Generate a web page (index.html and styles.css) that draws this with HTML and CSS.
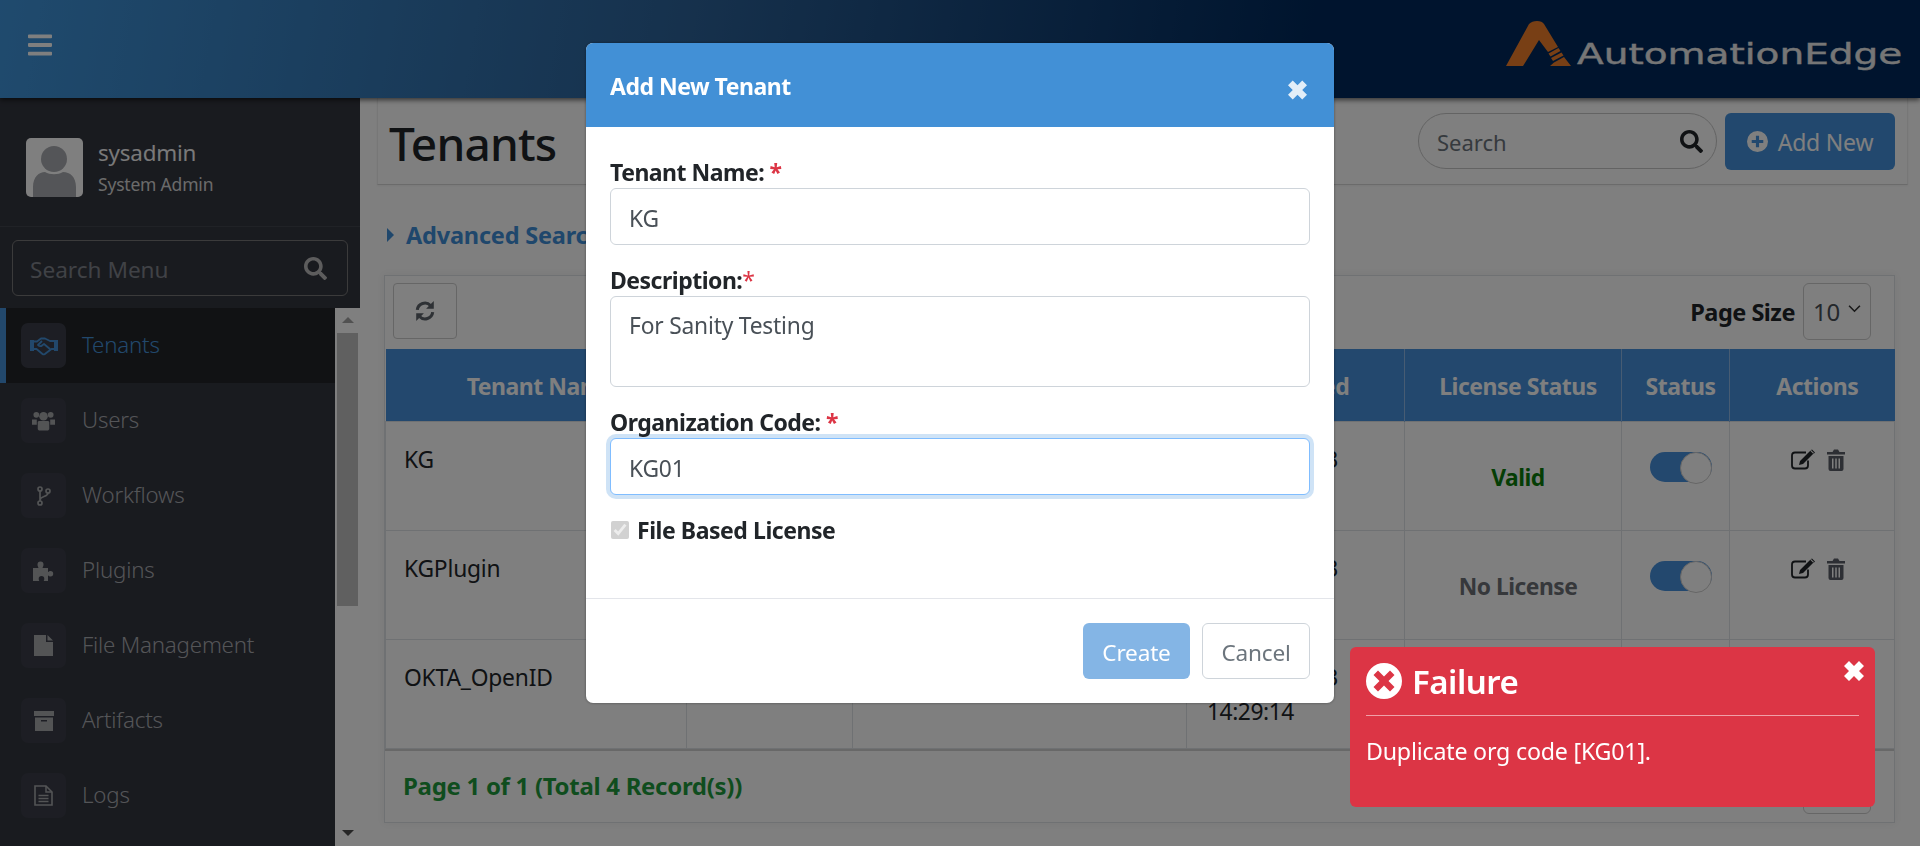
FILE: index.html
```html
<!DOCTYPE html>
<html lang="en">
<head>
    <meta charset="UTF-8">
    <meta name="viewport" content="width=device-width, initial-scale=1.0">
    <title>Tenants | AutomationEdge</title>
    <link rel="stylesheet" href="styles.css">
</head>
<body>
    <!-- Icons -->
    <svg class="sprite" xmlns="http://www.w3.org/2000/svg">
        <symbol id="i-bars" viewBox="0 0 448 512"><path d="M16 132h416c8.837 0 16-7.163 16-16V76c0-8.837-7.163-16-16-16H16C7.163 60 0 67.163 0 76v40c0 8.837 7.163 16 16 16zm0 160h416c8.837 0 16-7.163 16-16v-40c0-8.837-7.163-16-16-16H16c-8.837 0-16 7.163-16 16v40c0 8.837 7.163 16 16 16zm0 160h416c8.837 0 16-7.163 16-16v-40c0-8.837-7.163-16-16-16H16c-8.837 0-16 7.163-16 16v40c0 8.837 7.163 16 16 16z"/></symbol>
        <symbol id="i-search" viewBox="0 0 512 512"><path d="M505 442.7L405.3 343c-4.5-4.5-10.6-7-17-7H372c27.6-35.3 44-79.7 44-128C416 93.1 322.9 0 208 0S0 93.1 0 208s93.1 208 208 208c48.3 0 92.7-16.4 128-44v16.3c0 6.4 2.5 12.5 7 17l99.7 99.7c9.4 9.4 24.6 9.4 33.9 0l28.3-28.3c9.4-9.4 9.4-24.6.1-34zM208 336c-70.7 0-128-57.2-128-128 0-70.7 57.2-128 128-128 70.7 0 128 57.2 128 128 0 70.7-57.2 128-128 128z"/></symbol>
        <symbol id="i-handshake" viewBox="0 0 28 20"><path d="M0 4h4v11H0zM24 4h4v11h-4z"/><path d="M4 5.500h3l4-3h4l5 2.500h4M4 13h2.500l6 5c1 .8 2.500.3 3-.5l6-4.500h2.500M12 5l-4 4c1 1.500 3 1.500 4 .500l2-1.500 6.500 5.500" fill="none" stroke="currentColor" stroke-width="1.800" stroke-linejoin="round"/></symbol>
        <symbol id="i-users" viewBox="0 0 24 20"><circle cx="4.500" cy="3.500" r="3"/><circle cx="19.500" cy="3.500" r="3"/><circle cx="12" cy="5" r="4.500"/><path d="M0 8.500h5v5.500H0zM19 8.500h5v5.500h-5z"/><path d="M6 11.500c0-1 1-1.500 2-1.500h8c1 0 2 .5 2 1.500V18c0 1-1 2-2 2H8c-1 0-2-1-2-2z"/></symbol>
        <symbol id="i-branch" viewBox="0 0 14 20"><g fill="none" stroke="currentColor" stroke-width="1.700"><circle cx="3" cy="3" r="2"/><circle cx="3" cy="17" r="2"/><circle cx="11" cy="5" r="2"/><path d="M3 5v10M11 7c0 4-8 3-8 7"/></g></symbol>
        <symbol id="i-puzzle" viewBox="0 0 21 20"><path d="M0 7h5.500C5 5.500 4.500 5 4.500 3.500a3 3 0 0 1 6 0c0 1.500-.5 2-1 3.500H15v4c1-.5 1.500-1 2.500-1a2.700 2.700 0 0 1 0 5.400c-1 0-1.500-.5-2.500-1v6h-4.500c.5-1 .8-1.500.8-2.500a2.800 2.800 0 0 0-5.600 0c0 1 .3 1.500.8 2.500H0z"/></symbol>
        <symbol id="i-file" viewBox="0 0 19 21"><path d="M0 0h12v7h7v14H0zM13.500 0L19 5.500h-5.500z"/></symbol>
        <symbol id="i-archive" viewBox="0 0 20 20"><path d="M0 0h20v5H0zM1 6.500h18V20H1zM7 9v1.500h6V9z" fill-rule="evenodd"/></symbol>
        <symbol id="i-doc" viewBox="0 0 19 21"><path d="M1 1h11l6 6v13H1z" fill="none" stroke="currentColor" stroke-width="1.600"/><path d="M12 1v6h6M4.500 10.500h10M4.500 13.500h10M4.500 16.500h10" fill="none" stroke="currentColor" stroke-width="1.500"/></symbol>
        <symbol id="i-sync" viewBox="0 0 20 20"><path d="M3 9a7 7 0 0 1 12-4M17 11a7 7 0 0 1-12 4" fill="none" stroke="currentColor" stroke-width="2.800"/><path d="M18 1v7h-7zM2 19v-7h7z"/></symbol>
        <symbol id="i-plus" viewBox="0 0 20 20"><path fill-rule="evenodd" d="M10 0a10 10 0 1 1 0 20 10 10 0 0 1 0-20zM8.500 4.500v4h-4v3h4v4h3v-4h4v-3h-4v-4z"/></symbol>
        <symbol id="i-edit" viewBox="0 0 24 20"><path d="M15 3H4a3 3 0 0 0-3 3v10a3 3 0 0 0 3 3h10a3 3 0 0 0 3-3v-5" fill="none" stroke="currentColor" stroke-width="1.800"/><path d="M20 .5l3 3L12 14.500l-4 1 1-4zM19 1l3.500 3.500L24 3l-3-3z"/></symbol>
        <symbol id="i-trash" viewBox="0 0 18 22"><path fill-rule="evenodd" d="M0 3h5.500L7 .5h4L12.500 3H18v2.500H0zM1.500 7h15v13a2 2 0 0 1-2 2h-11a2 2 0 0 1-2-2zM5 9.500v10h1.500v-10zM8.250 9.500v10h1.500v-10zM11.500 9.500v10H13v-10z"/></symbol>
        <symbol id="i-times" viewBox="0 0 20 20"><path d="M5 0l5 5 5-5 5 5-5 5 5 5-5 5-5-5-5 5-5-5 5-5-5-5z"/></symbol>
        <symbol id="i-times-circle" viewBox="0 0 36 36"><path fill-rule="evenodd" d="M18 0a18 18 0 1 1 0 36 18 18 0 0 1 0-36zM12 7.500L7.500 12l6 6-6 6 4.500 4.500 6-6 6 6 4.500-4.500-6-6 6-6L24 7.500l-6 6z"/></symbol>
    </svg>

    <div class="app">
        <!-- Top bar -->
        <header class="topbar">
            <svg class="menu-toggle"><use href="#i-bars"/></svg>
            <div class="brand">
                <svg class="brand-mark" viewBox="0 0 65 45">
                    <path d="M0 45L23 3Q26 0 31 0 36 0 38 3L52 26 42 31 33 19 17 45z" fill="#f07f2a"/>
                    <path d="M42.500 32.500L52.500 27 54.500 30 44.500 35.500zM45 37L55.500 31.500 57.500 34.500 47 40zM44 45L48 41.500 58 36 65 45z" fill="#f07f2a"/>
                </svg>
                <span class="brand-name">AutomationEdge</span>
            </div>
        </header>

        <div class="layout">
            <!-- Sidebar -->
            <aside class="sidebar">
                <div class="user-box">
                    <div class="avatar">
                        <svg viewBox="0 0 57 59"><circle cx="28" cy="21" r="13" fill="#a9abb0"/><path d="M7 59V49c0-10 6-15 12-15 5 3 13 3 18 0 7 0 13 5 13 15v10z" fill="#a9abb0"/></svg>
                    </div>
                    <div>
                        <div class="user-name">sysadmin</div>
                        <div class="user-role">System Admin</div>
                    </div>
                </div>
                <div class="menu-search-wrap">
                    <div class="menu-search">
                        <input type="text" placeholder="Search Menu">
                        <svg><use href="#i-search"/></svg>
                    </div>
                </div>
                <div class="menu-area">
                    <ul class="menu">
                        <li class="menu-item active"><span class="menu-icon"><svg class="ic-hand"><use href="#i-handshake"/></svg></span><span class="menu-label">Tenants</span></li>
                        <li class="menu-item"><span class="menu-icon"><svg class="ic-users"><use href="#i-users"/></svg></span><span class="menu-label">Users</span></li>
                        <li class="menu-item"><span class="menu-icon"><svg class="ic-branch"><use href="#i-branch"/></svg></span><span class="menu-label">Workflows</span></li>
                        <li class="menu-item"><span class="menu-icon"><svg class="ic-puzzle"><use href="#i-puzzle"/></svg></span><span class="menu-label">Plugins</span></li>
                        <li class="menu-item"><span class="menu-icon"><svg class="ic-file"><use href="#i-file"/></svg></span><span class="menu-label">File Management</span></li>
                        <li class="menu-item"><span class="menu-icon"><svg class="ic-archive"><use href="#i-archive"/></svg></span><span class="menu-label">Artifacts</span></li>
                        <li class="menu-item"><span class="menu-icon"><svg class="ic-file"><use href="#i-doc"/></svg></span><span class="menu-label">Logs</span></li>
                    </ul>
                    <div class="scrollbar">
                        <span class="arrow-up"></span>
                        <span class="thumb"></span>
                        <span class="arrow-down"></span>
                    </div>
                </div>
            </aside>

            <!-- Main content -->
            <main class="content">
                <div class="page-head">
                    <h1>Tenants</h1>
                    <div class="page-actions">
                        <div class="search-pill">
                            <input type="text" placeholder="Search">
                            <svg><use href="#i-search"/></svg>
                        </div>
                        <button class="btn-add"><svg><use href="#i-plus"/></svg>Add New</button>
                    </div>
                </div>

                <div class="advanced"><span class="caret"></span>Advanced Search</div>

                <div class="card">
                    <div class="toolbar">
                        <button class="btn-refresh"><svg><use href="#i-sync"/></svg></button>
                        <div class="page-size">
                            <b>Page Size</b>
                            <div class="size-select">10<svg viewBox="0 0 12 8"><path d="M1 1.500l5 5 5-5" fill="none" stroke="currentColor" stroke-width="1.500"/></svg></div>
                        </div>
                    </div>
                    <table class="grid">
                        <colgroup>
                            <col class="c1"><col class="c2"><col class="c3"><col class="c4"><col class="c5"><col class="c6"><col class="c7">
                        </colgroup>
                        <thead>
                            <tr>
                                <th>Tenant Name</th><th></th><th></th><th>Modified</th><th>License Status</th><th>Status</th><th>Actions</th>
                            </tr>
                        </thead>
                        <tbody>
                            <tr>
                                <td>KG</td><td></td><td></td><td class="when">12-Mar-2023<br>14:29:14</td>
                                <td class="lic valid">Valid</td>
                                <td><span class="toggle"></span></td>
                                <td class="acts"><svg class="ic-edit"><use href="#i-edit"/></svg><svg class="ic-trash"><use href="#i-trash"/></svg></td>
                            </tr>
                            <tr>
                                <td>KGPlugin</td><td></td><td></td><td class="when">12-Mar-2023<br>14:29:14</td>
                                <td class="lic none">No License</td>
                                <td><span class="toggle"></span></td>
                                <td class="acts"><svg class="ic-edit"><use href="#i-edit"/></svg><svg class="ic-trash"><use href="#i-trash"/></svg></td>
                            </tr>
                            <tr>
                                <td>OKTA_OpenID</td><td></td><td></td><td class="when">12-Mar-2023<br>14:29:14</td>
                                <td class="lic none">No License</td>
                                <td><span class="toggle"></span></td>
                                <td class="acts"><svg class="ic-edit"><use href="#i-edit"/></svg><svg class="ic-trash"><use href="#i-trash"/></svg></td>
                            </tr>
                        </tbody>
                    </table>
                    <div class="card-foot">
                        <b>Page 1 of 1 (Total 4 Record(s))</b>
                        <div class="pager-box"></div>
                    </div>
                </div>
            </main>
        </div>
    </div>

    <!-- Modal -->
    <div class="backdrop">
        <div class="modal">
            <div class="modal-head">
                <h2>Add New Tenant</h2>
                <svg class="modal-close"><use href="#i-times"/></svg>
            </div>
            <div class="modal-body">
                <label class="field-label">Tenant Name: <span class="req">*</span></label>
                <input class="form-control" type="text" value="KG">
                <label class="field-label">Description:<span class="req thin">*</span></label>
                <textarea class="form-control area">For Sanity Testing</textarea>
                <label class="field-label">Organization Code: <span class="req">*</span></label>
                <input class="form-control focused" type="text" value="KG01">
                <label class="check-row"><input type="checkbox" checked disabled> File Based License</label>
            </div>
            <div class="modal-foot">
                <button class="btn-create">Create</button>
                <button class="btn-cancel">Cancel</button>
            </div>
        </div>
    </div>

    <!-- Toast -->
    <div class="toast">
        <svg class="toast-close"><use href="#i-times"/></svg>
        <div class="toast-title"><svg><use href="#i-times-circle"/></svg>Failure</div>
        <div class="toast-msg">Duplicate org code [KG01].</div>
    </div>
</body>
</html>
```

FILE: styles.css
```css
/* Global Styles */
* {
    box-sizing: border-box;
    font-family: 'Noto Sans', 'Open Sans', sans-serif;
}

html, body {
    margin: 0;
    height: 100%;
    overflow: hidden;
}

body {
    font-size: 20px;
    letter-spacing: -0.2px;
    color: #212529;
    background: #fff;
}

svg {
    fill: currentColor;
}

.sprite {
    display: none;
}

.app {
    height: 846px;
    display: flex;
    flex-direction: column;
}

/* Top bar */
.topbar {
    height: 98px;
    flex: none;
    display: flex;
    align-items: center;
    justify-content: space-between;
    padding: 0 16px 12px 28px;
    background: linear-gradient(100deg, #3f95dc 0%, #2c6299 36%, #00295c 68%, #00295c 100%);
    box-shadow: 0 2px 5px rgba(0,0,0,0.6);
    position: relative;
    z-index: 2;
}

.menu-toggle {
    width: 24px;
    height: 28px;
    margin-top: 4px;
    color: #fff;
}

.brand {
    display: flex;
    align-items: flex-end;
    gap: 6px;
}

.brand-mark {
    width: 65px;
    height: 45px;
}

.brand-name {
    display: inline-block;
    width: 243px;
    margin-right: 84px;
    font-family: 'DejaVu Sans', sans-serif;
    font-size: 29px;
    line-height: 30px;
    letter-spacing: 0;
    white-space: nowrap;
    color: #ececec;
    -webkit-text-stroke: 0.4px #ececec;
    transform: scaleX(1.345);
    transform-origin: left center;
    margin-bottom: -3px;
}

.layout {
    flex: 1;
    display: flex;
    min-height: 0;
}

/* Sidebar */
.sidebar {
    width: 360px;
    flex: none;
    display: flex;
    flex-direction: column;
    background: #33363f;
}

.user-box {
    height: 129px;
    flex: none;
    display: flex;
    align-items: center;
    gap: 15px;
    padding: 10px 26px 0;
    border-bottom: 1px solid #41444c;
}

.avatar {
    width: 57px;
    height: 59px;
    background: #fff;
    border-radius: 5px;
    overflow: hidden;
}

.avatar svg {
    display: block;
    width: 57px;
    height: 59px;
}

.user-name {
    font-size: 22.400px;
    line-height: 34px;
    color: #f2f2f2;
}

.user-role {
    font-size: 17.500px;
    line-height: 28px;
    color: #d6d6d6;
}

.menu-search-wrap {
    flex: none;
    height: 81px;
    padding: 13px 12px 12px;
}

.menu-search {
    height: 56px;
    display: flex;
    align-items: center;
    padding: 0 20px 0 17px;
    border: 1px solid #777;
    border-radius: 6px;
}

.menu-search input {
    flex: 1;
    min-width: 0;
    padding: 2px 0 0;
    border: none;
    outline: none;
    background: transparent;
    font-size: 22.600px;
    color: #ddd;
}

.menu-search input::placeholder {
    color: #80848c;
    opacity: 1;
}

.menu-search svg {
    width: 23px;
    height: 23px;
    color: #bbb;
}

.menu-area {
    flex: 1;
    display: flex;
    min-height: 0;
}

.menu {
    flex: 1;
    list-style: none;
    margin: 0;
    padding: 0;
}

.menu-item {
    height: 75px;
    display: flex;
    align-items: center;
    gap: 16px;
    padding-left: 21px;
    font-size: 22.300px;
    font-weight: 300;
    color: #a8aaaf;
}

.menu-label {
    margin-bottom: 3px;
}

.menu-item.active {
    background: #222428;
    color: #4491d8;
    border-left: 6px solid #4491d8;
    padding-left: 15px;
}

.menu-icon {
    width: 45px;
    height: 45px;
    display: flex;
    align-items: center;
    justify-content: center;
    background: #3a3d48;
    border-radius: 7px;
    color: #a6a8ab;
}

.menu-item.active .menu-icon {
    color: #4491d8;
}

.ic-hand { width: 28px; height: 20px; }
.ic-users { width: 23px; height: 20px; }
.ic-branch { width: 14px; height: 20px; }
.ic-puzzle { width: 21px; height: 20px; }
.ic-file { width: 19px; height: 21px; }
.ic-archive { width: 20px; height: 20px; }

.scrollbar {
    width: 25px;
    flex: none;
    display: flex;
    flex-direction: column;
    align-items: center;
    padding: 9px 2px 10px;
    background: #fefefe;
}

.scrollbar .thumb {
    width: 21px;
    height: 273px;
    margin-top: 10px;
    background: #c1c1c1;
}

.arrow-up, .arrow-down {
    width: 0;
    height: 0;
    border-left: 6px solid transparent;
    border-right: 6px solid transparent;
}

.arrow-up {
    border-bottom: 6px solid #a3a3a3;
}

.arrow-down {
    margin-top: auto;
    border-top: 6px solid #4d4d4d;
}

/* Main content */
.content {
    flex: 1;
    min-width: 0;
    background: #fefefe;
    padding: 0 12px 0 17px;
}

.page-head {
    height: 87px;
    display: flex;
    align-items: center;
    justify-content: space-between;
    padding: 1px 12px 0 11px;
    border: 1px solid #eee;
    border-top: none;
    border-bottom-color: #d6d6d6;
    box-shadow: 0 1px 2px rgba(0,0,0,0.05);
}

.page-head h1 {
    margin: 2px 0 0;
    font-size: 46px;
    font-weight: 500;
    letter-spacing: -0.8px;
    color: #212529;
}

.page-actions {
    display: flex;
    gap: 8px;
}

.search-pill {
    width: 299px;
    height: 56px;
    display: flex;
    align-items: center;
    padding: 0 13px 0 18px;
    border: 1px solid #c7c7c7;
    border-radius: 28px;
}

.search-pill input {
    flex: 1;
    min-width: 0;
    padding: 2px 0 0;
    border: none;
    outline: none;
    background: transparent;
    font-size: 22px;
}

.search-pill input::placeholder {
    color: #6c757d;
    opacity: 1;
}

.search-pill svg {
    width: 23px;
    height: 23px;
    color: #212529;
}

.btn-add {
    width: 170px;
    height: 57px;
    display: flex;
    align-items: center;
    justify-content: center;
    gap: 10px;
    border: none;
    border-radius: 6px;
    background: #4491dc;
    color: #fff;
    font-size: 23px;
    letter-spacing: -0.2px;
}

.btn-add svg {
    width: 21px;
    height: 21px;
}

.advanced {
    display: flex;
    align-items: center;
    height: 34px;
    margin: 33px 0 23px 10px;
    font-size: 23.500px;
    font-weight: 700;
    color: #3f8fd8;
}

.caret {
    width: 0;
    height: 0;
    margin-right: 12px;
    border-top: 7px solid transparent;
    border-bottom: 7px solid transparent;
    border-left: 7px solid #3f8fd8;
}

.card {
    margin: 0 13px 0 7px;
    height: 548px;
    background: #fff;
    border: 1px solid #dee2e6;
    box-shadow: 0 0 8px rgba(0,0,0,0.06);
}

.toolbar {
    height: 73px;
    display: flex;
    align-items: flex-start;
    justify-content: space-between;
    padding: 7px 23px 0 8px;
}

.btn-refresh {
    width: 64px;
    height: 56px;
    display: flex;
    align-items: center;
    justify-content: center;
    background: #fff;
    border: 1px solid #ccc;
    border-radius: 4px;
    color: #5d636a;
}

.btn-refresh svg {
    width: 22px;
    height: 22px;
}

.page-size {
    display: flex;
    align-items: center;
    gap: 8px;
}

.page-size b {
    font-size: 23.500px;
    font-weight: 700;
    letter-spacing: -0.5px;
}

.size-select, .pager-box {
    width: 68px;
    height: 57px;
    border: 1px solid #ccc;
    border-radius: 6px;
}

.size-select {
    display: flex;
    align-items: center;
    justify-content: space-between;
    padding: 0 9px;
    font-size: 24px;
    color: #495057;
}

.size-select svg {
    width: 13px;
    height: 9px;
    margin-bottom: 6px;
    color: #333;
}

.grid {
    width: 100%;
    table-layout: fixed;
    border-collapse: collapse;
}

.c1 { width: 301px; }
.c2 { width: 166px; }
.c3 { width: 334px; }
.c4 { width: 218px; }
.c5 { width: 217px; }
.c6 { width: 108px; }
.c7 { width: 165px; }

.grid th {
    height: 72px;
    background: #4690dc;
    color: #fff;
    font-size: 23px;
    font-weight: 700;
    letter-spacing: -0.5px;
    border-left: 1px solid #8fb9e6;
    padding: 3px 0 0 10px;
}

.grid th:first-child {
    border-left: none;
}

.grid td {
    height: 109px;
    padding: 21px 20px 0;
    vertical-align: top;
    font-size: 22.800px;
    line-height: 34px;
    border: 1px solid #dee2e6;
}

.grid td:first-child {
    padding-left: 18px;
}

.grid td.when {
    letter-spacing: -0.45px;
}

.grid td.lic {
    padding: 39px 0 0 10px;
    text-align: center;
    font-weight: 700;
    letter-spacing: -0.5px;
}

.valid {
    color: #0a7d0a;
}

.none {
    color: #6c7076;
}

.toggle {
    display: block;
    width: 62px;
    height: 30px;
    margin: 9px 0 0 8px;
    background: #4690dc;
    border-radius: 15px;
    position: relative;
}

/* knob sits over the track */
.toggle::after {
    content: "";
    position: absolute;
    right: 0;
    top: 0;
    width: 30px;
    height: 30px;
    background: #fff;
    border: 1px solid #ccc;
    border-radius: 50%;
}

.grid td.acts {
    padding: 27px 0 0 61px;
    line-height: 0;
}

.ic-edit {
    width: 24px;
    height: 21px;
    margin-right: 12px;
    vertical-align: top;
    color: #212529;
}

.ic-trash {
    width: 18px;
    height: 22px;
    vertical-align: top;
    color: #5a5f68;
}

.card-foot {
    height: 72px;
    display: flex;
    align-items: center;
    justify-content: space-between;
    padding: 0 23px 0 18px;
    border-top: 2px solid #d0d0d0;
    color: #1f9a3c;
    font-size: 24px;
}

.card-foot b {
    font-weight: 700;
    letter-spacing: -0.3px;
}

.pager-box {
    height: 50px;
    margin-top: 6px;
}

/* Modal */
.backdrop {
    position: fixed;
    inset: 0;
    z-index: 10;
    background: rgba(0,0,0,0.5);
}

.modal {
    position: absolute;
    left: 586px;
    top: 43px;
    width: 748px;
    height: 660px;
    background: #fff;
    border-radius: 7px;
    overflow: hidden;
    box-shadow: 0 0 3px rgba(0,0,0,0.4);
}

.modal-head {
    height: 84px;
    display: flex;
    align-items: center;
    justify-content: space-between;
    padding: 0 27px 0 24px;
    background: #4290d6;
    color: #fff;
}

.modal-head h2 {
    margin: 2px 0 0;
    font-size: 23px;
    font-weight: 700;
    letter-spacing: -0.5px;
}

.modal-close {
    width: 19px;
    height: 20px;
    margin-top: 9px;
    color: #e3eef8;
}

.modal-body {
    height: 472px;
    padding: 30px 24px 0;
    border-bottom: 1px solid #e3e5ea;
}

.field-label {
    display: block;
    font-size: 23px;
    line-height: 27px;
    height: 31px;
    padding-top: 2px;
    font-weight: 700;
    letter-spacing: -0.5px;
}

.req {
    color: #dc3545;
}

.req.thin {
    font-weight: 400;
}

.form-control {
    display: block;
    width: 100%;
    height: 57px;
    padding: 3px 18px 0;
    margin-bottom: 20px;
    border: 1px solid #ced4da;
    border-radius: 6px;
    background: #fff;
    color: #495057;
    font-size: 22.800px;
    letter-spacing: -0.2px;
    outline: none;
}

.form-control.area {
    height: 91px;
    padding-top: 13px;
    resize: none;
}

.form-control.focused {
    margin-bottom: 19px;
    border-color: #80bdff;
    box-shadow: 0 0 0 4px #cfe3f6;
}

.check-row {
    display: inline-flex;
    align-items: center;
    gap: 8px;
    font-size: 23px;
    font-weight: 700;
    letter-spacing: -0.45px;
}

.check-row input {
    width: 18px;
    height: 18px;
    margin: 0 0 0 1px;
}

.modal-foot {
    display: flex;
    justify-content: flex-end;
    gap: 12px;
    padding: 24px 24px 0;
}

.btn-create, .btn-cancel {
    width: 107px;
    height: 56px;
    padding-top: 3px;
    border-radius: 6px;
    font-size: 22.600px;
    letter-spacing: -0.2px;
}

.btn-create {
    border: none;
    background: #84b5e5;
    color: #fff;
}

.btn-cancel {
    width: 108px;
    background: #fff;
    border: 1px solid #ced4da;
    color: #6c757d;
}

/* Toast */
.toast {
    position: fixed;
    left: 1350px;
    top: 647px;
    width: 525px;
    height: 160px;
    z-index: 20;
    padding: 16px 16px 0;
    background: #dc3545;
    border-radius: 6px;
    color: #fff;
}

.toast-title {
    display: flex;
    align-items: center;
    gap: 10px;
    font-size: 33px;
    font-weight: 600;
    letter-spacing: -0.5px;
    border-bottom: 1px solid #f0a0a8;
    padding-bottom: 16px;
    box-sizing: content-box;
    height: 36px;
}

.toast-title svg {
    width: 36px;
    height: 36px;
}

.toast-msg {
    margin-top: 20px;
    font-size: 23.200px;
    line-height: 30px;
}

.toast-close {
    position: absolute;
    right: 11px;
    top: 14px;
    width: 20px;
    height: 20px;
}
```
